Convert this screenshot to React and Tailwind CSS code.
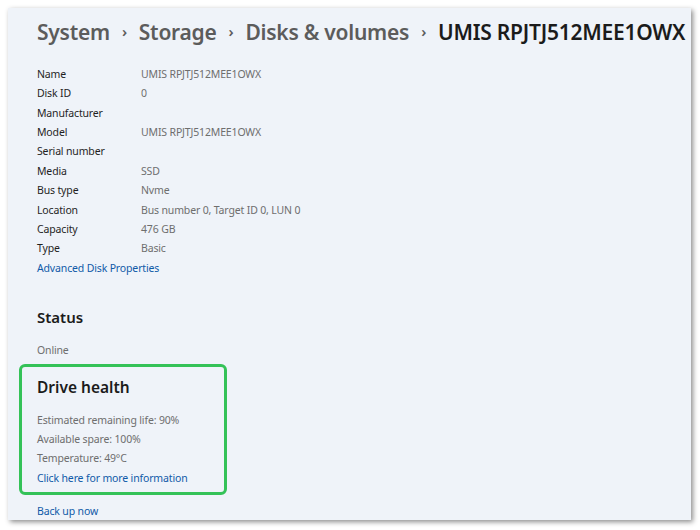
import React from 'react';

const rows = [
  ['Name', 'UMIS RPJTJ512MEE1OWX'],
  ['Disk ID', '0'],
  ['Manufacturer', ''],
  ['Model', 'UMIS RPJTJ512MEE1OWX'],
  ['Serial number', ''],
  ['Media', 'SSD'],
  ['Bus type', 'Nvme'],
  ['Location', 'Bus number 0, Target ID 0, LUN 0'],
  ['Capacity', '476 GB'],
  ['Type', 'Basic'],
];

function Crumb({ children }) {
  return <span className="text-[#5c5c5c]">{children}</span>;
}

function Sep() {
  return <span className="text-[#5c5c5c] text-[15px] px-[12px] relative -top-[2px]">›</span>;
}

export default function App() {
  return (
    <div className="w-[700px] h-[530px] bg-white p-2" style={{ fontFamily: '"Noto Sans", "Open Sans", sans-serif' }}>
      <div className="w-[683px] h-[512px] bg-[#eff3f9] shadow-[2px_2px_5px_rgba(0,0,0,0.45)] overflow-hidden pl-[29px]">
        <div className="h-[50px] flex items-center whitespace-nowrap text-[21px] font-semibold tracking-[-0.25px]">
          <Crumb>System</Crumb>
          <Sep />
          <Crumb>Storage</Crumb>
          <Sep />
          <Crumb>Disks &amp; volumes</Crumb>
          <Sep />
          <span className="text-[#1b1b1b]">UMIS RPJTJ512MEE1OWX</span>
        </div>

        <div className="mt-[7px] flex flex-col text-[10.5px] tracking-[-0.15px]">
          {rows.map(([k, v]) => (
            <div key={k} className="h-[19.4px] flex items-center">
              <span className="w-[104px] text-[#1f1f1f]">{k}</span>
              <span className="text-[#6e6e6e]">{v}</span>
            </div>
          ))}
          <div className="h-[19.4px] flex items-center text-[#0f5aa8]">Advanced Disk Properties</div>
        </div>

        <div className="mt-[28px] text-[15px] font-semibold text-[#1b1b1b]">Status</div>
        <div className="mt-[14px] text-[10.5px] tracking-[-0.15px] text-[#6e6e6e]">Online</div>

        <div className="-ml-[18px] mt-[5px] w-[208px] h-[131px] border-[3px] border-[#34c258] rounded-[6px] pl-[15px]">
          <div className="mt-[9px] text-[15.5px] font-semibold text-[#1b1b1b]">Drive health</div>
          <div className="mt-[12px] flex flex-col text-[10.5px] tracking-[-0.15px] text-[#6e6e6e]">
            <div className="h-[19.4px] flex items-center">Estimated remaining life: 90%</div>
            <div className="h-[19.4px] flex items-center">Available spare: 100%</div>
            <div className="h-[19.4px] flex items-center">Temperature: 49°C</div>
            <div className="h-[19.4px] flex items-center text-[#0f5aa8]">Click here for more information</div>
          </div>
        </div>

        <div className="mt-[9px] text-[10.5px] tracking-[-0.15px] text-[#0f5aa8]">Back up now</div>
      </div>
    </div>
  );
}
